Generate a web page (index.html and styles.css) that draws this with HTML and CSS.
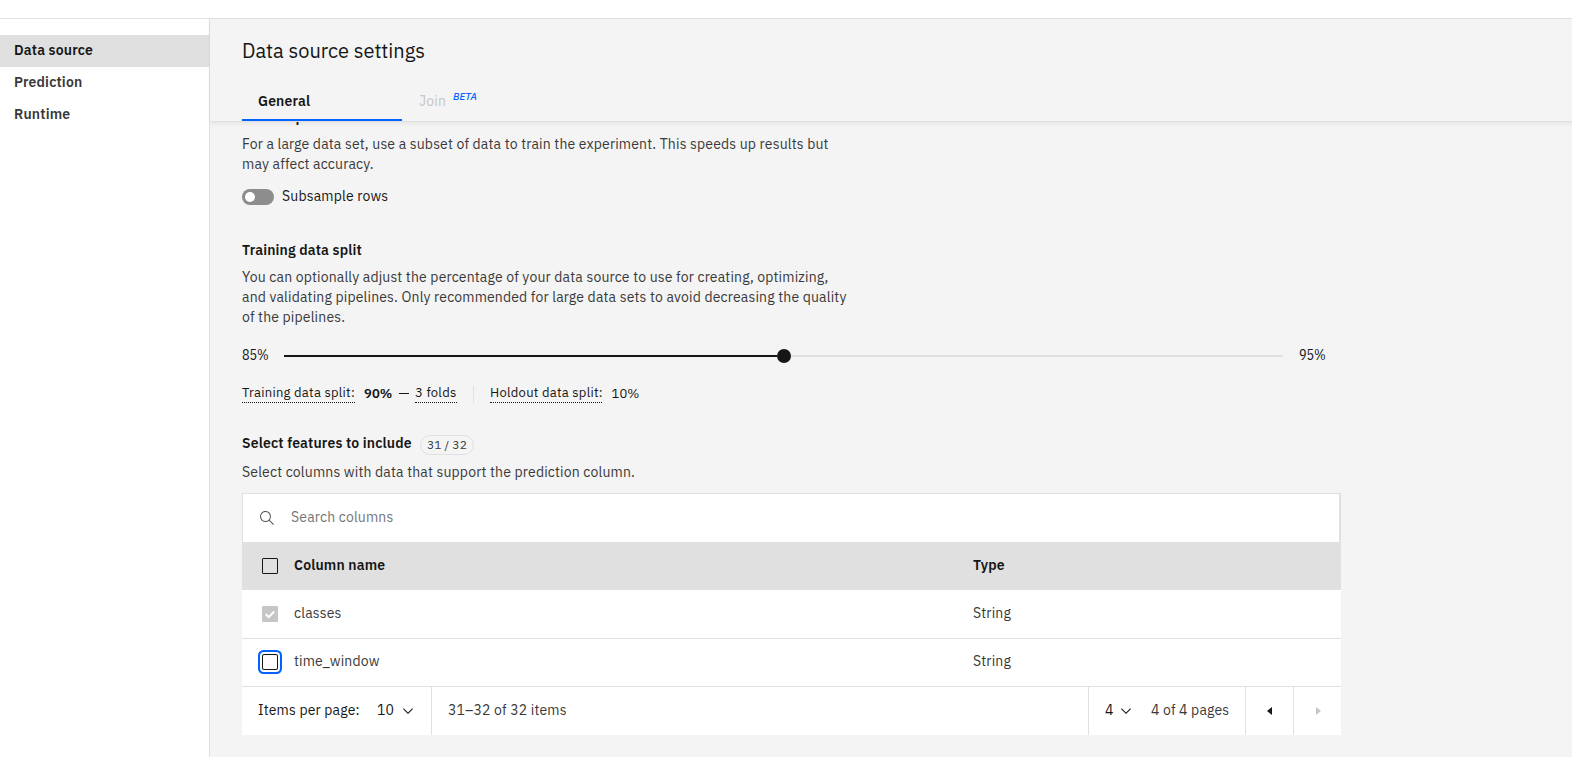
FILE: index.html
```html
<!DOCTYPE html>
<html lang="en">
<head>
<meta charset="utf-8">
<title>Data source settings</title>
<link rel="stylesheet" href="styles.css">
</head>
<body>
<div class="topbar"></div>
<div class="shell">
  <nav class="sidebar">
    <a class="nav-item nav-item--active">Data source</a>
    <a class="nav-item">Prediction</a>
    <a class="nav-item">Runtime</a>
  </nav>
  <main class="main">
    <header class="header">
      <h1 class="title">Data source settings</h1>
      <div class="tabs">
        <div class="tab tab--active"><span>General</span></div>
        <div class="tab tab--disabled"><span>Join</span><em class="beta">BETA</em></div>
      </div>
    </header>
    <div class="content">
      <h2 class="heading heading--clipped">Subsample</h2>
      <p class="text">For a large data set, use a subset of data to train the experiment. This speeds up results but<br>may affect accuracy.</p>
      <div class="toggle-row"><span class="toggle"><span class="knob"></span></span><span class="toggle-label">Subsample rows</span></div>
      <h2 class="heading heading--split">Training data split</h2>
      <p class="text">You can optionally adjust the percentage of your data source to use for creating, optimizing,<br>and validating pipelines. Only recommended for large data sets to avoid decreasing the quality<br>of the pipelines.</p>
      <div class="slider">
        <span class="slider-min">85%</span>
        <div class="track"><div class="fill"></div><div class="thumb"></div><div class="rest"></div></div>
        <span class="slider-max">95%</span>
      </div>
      <div class="split">
        <span class="term term--train">Training data split:</span>
        <strong class="train-value">90%</strong>
        <span class="dash"></span>
        <span class="term term--folds">3 folds</span>
        <span class="divider"></span>
        <span class="term term--holdout">Holdout data split:</span>
        <span class="holdout-value">10%</span>
      </div>
      <div class="features-head"><h2 class="heading heading--features">Select features to include</h2><span class="tag">31 / 32</span></div>
      <p class="text features-desc">Select columns with data that support the prediction column.</p>
      <section class="table">
        <div class="search">
          <svg class="search-icon" width="16" height="16" viewBox="0 0 16 16"><path d="M15 14.3L10.7 10c1.9-2.3 1.6-5.8-.7-7.7S4.200.7 2.300 3 .7 8.800 3 10.700c2 1.700 5 1.700 7 0l4.300 4.300.7-.7zM2 6.500C2 4 4 2 6.500 2S11 4 11 6.500 9 11 6.500 11 2 9 2 6.500z"/></svg>
          <span class="placeholder">Search columns</span>
        </div>
        <div class="row row--head"><span class="check"></span><span class="cell-name">Column name</span><span class="cell-type">Type</span></div>
        <div class="row"><span class="check check--disabled"><svg width="16" height="16" viewBox="0 0 16 16"><path d="M3.800 8.300L6.700 11.100 12.300 5.500" fill="none" stroke="#fff" stroke-width="2"/></svg></span><span class="cell-name">classes</span><span class="cell-type">String</span></div>
        <div class="row row--line"><span class="check check--focus"></span><span class="cell-name">time_window</span><span class="cell-type">String</span></div>
        <footer class="pagination">
          <div class="page-size"><span class="page-size-label">Items per page:</span><span class="page-size-value">10</span><svg class="chevron" width="16" height="16" viewBox="0 0 16 16"><path d="M8 11L3 6l.7-.7L8 9.600l4.300-4.300.7.7z"/></svg></div>
          <span class="range">31–32 of 32 items</span>
          <div class="page-pick"><span class="page-value">4</span><svg class="chevron" width="16" height="16" viewBox="0 0 16 16"><path d="M8 11L3 6l.7-.7L8 9.600l4.300-4.300.7.7z"/></svg><span class="page-total">4 of 4 pages</span></div>
          <div class="page-button"><svg width="16" height="16" viewBox="0 0 16 16"><path d="M10 4v8L5 8z"/></svg></div>
          <div class="page-button page-button--disabled"><svg width="16" height="16" viewBox="0 0 16 16"><path d="M6 4v8l5-4z"/></svg></div>
        </footer>
      </section>
    </div>
  </main>
</div>
</body>
</html>
```
FILE: styles.css
```css
* { box-sizing: border-box; }
body { margin: 0; height: 757px; overflow: hidden; display: flex; flex-direction: column; background: #fff; color: #161616; font-family: "IBM Plex Sans", Roboto, sans-serif; font-size: 14px; line-height: 20px; letter-spacing: 0.16px; }
h1, h2, p { margin: 0; }
span, strong, h1, h2, p, a { white-space: nowrap; }
.topbar { height: 19px; flex: none; border-bottom: 1px solid #e0e0e0; }
.shell { display: flex; flex: 1; min-height: 0; }
.sidebar { width: 210px; flex: none; padding-top: 16px; border-right: 1px solid #e0e0e0; }
.nav-item { display: block; height: 32px; padding: 5px 14px; font-weight: 600; color: #393939; }
.nav-item--active { background: #e0e0e0; color: #161616; }
.main { flex: 1; min-width: 0; background: #f4f4f4; display: flex; flex-direction: column; }
.header { height: 103px; flex: none; padding-left: 32px; border-bottom: 1px solid #e0e0e0; box-shadow: 0 2px 4px rgba(0, 0, 0, 0.06); z-index: 1; background: #f4f4f4; }
.title { font-size: 20px; line-height: 28px; font-weight: 400; padding-top: 18px; letter-spacing: 0; }
.tabs { display: flex; gap: 1px; margin-top: 16px; height: 40px; }
.tab { width: 160px; padding: 10px 16px; display: flex; }
.tab--active { font-weight: 600; border-bottom: 2px solid #0062ff; }
.tab--disabled { color: #c6c6c6; }
.beta { margin-left: 7px; margin-top: -4px; font-size: 10px; font-weight: 500; color: #0062ff; letter-spacing: 0.1px; }
.content { flex: 1; min-height: 0; overflow: hidden; padding-left: 32px; }
.heading { font-size: 14px; line-height: 20px; font-weight: 600; }
.heading--clipped { margin-top: -15px; margin-bottom: 7px; }
.text { color: #393939; }
.toggle-row { display: flex; align-items: center; gap: 8px; height: 20px; margin-top: 13px; }
.toggle { width: 32px; height: 16px; border-radius: 8px; background: #8d8d8d; padding: 3px; }
.knob { display: block; width: 10px; height: 10px; border-radius: 50%; background: #fff; }
.toggle-label { margin-top: -2px; }
.heading--split { margin-top: 33px; margin-bottom: 7px; }
.slider { display: flex; align-items: center; height: 20px; margin-top: 19px; width: 1099px; }
.slider-min, .slider-max { font-family: "IBM Plex Sans Condensed", "Roboto Condensed", "IBM Plex Sans", Roboto, sans-serif; letter-spacing: 0; }
.slider-min { width: 42px; margin-top: -2px; }
.track { width: 999px; display: flex; align-items: center; }
.fill { height: 2px; width: 493px; background: #161616; }
.thumb { width: 14px; height: 14px; border-radius: 50%; background: #161616; }
.rest { height: 2px; flex: 1; background: #e0e0e0; }
.slider-max { margin-left: 16px; margin-top: -2px; }
.split { display: flex; margin-top: 19px; height: 18px; font-size: 13px; line-height: 16px; }
.term { height: 18px; border-bottom: 1px dotted #161616; line-height: 15px; letter-spacing: 0.26px; }
.term--train { width: 113px; }
.train-value { width: 27px; margin: 1px 0 0 9px; font-weight: 600; letter-spacing: 0.1px; }
.dash { width: 10px; height: 1px; margin: 8px 6px 0 8px; background: #161616; }
.term--folds { width: 42px; }
.divider { width: 1px; height: 17px; margin: 1px 16px 0; background: #e0e0e0; }
.term--holdout { width: 112px; }
.holdout-value { margin: 1px 0 0 9.5px; letter-spacing: 0.1px; }
.features-head { display: flex; margin-top: 30px; height: 24px; }
.heading--features { width: 170px; }
.tag { width: 54px; height: 20px; margin: 2px 0 0 8px; border: 1px solid #e0e0e0; border-radius: 10px; text-align: center; font-size: 12px; line-height: 17px; color: #393939; }
.features-desc { margin-top: 5px; }
.table { width: 1099px; margin-top: 11px; background: #fff; }
.search { height: 49px; display: flex; border: solid #e0e0e0; border-width: 1px 2px 0 1px; padding-left: 16px; }
.search-icon { margin-top: 16px; fill: #525252; }
.placeholder { margin: 13px 0 0 16px; color: #757575; }
.row { height: 48px; display: flex; padding: 13px 0 0 20px; color: #393939; }
.row--head { background: #e0e0e0; color: #161616; font-weight: 600; }
.row--line { border-top: 1px solid #e0e0e0; padding-top: 12px; }
.check { width: 16px; height: 16px; margin-top: 3px; border: 1px solid #161616; border-radius: 1px; }
.check--disabled { background: #c6c6c6; border: 0; }
.check svg { display: block; }
.check--focus { box-shadow: 0 0 0 2px #fff, 0 0 0 4px #0062ff; border-radius: 2px; }
.cell-name { width: 679px; margin-left: 16px; }
.pagination { height: 49px; display: flex; border-top: 1px solid #e0e0e0; color: #393939; }
.page-size { width: 190px; display: flex; padding: 13px 0 0 16px; border-right: 1px solid #e0e0e0; color: #161616; }
.page-size-label { width: 119px; }
.page-size-value { width: 23px; }
.chevron { margin-top: 3px; fill: #161616; }
.range { padding: 13px 16px; flex: 1; }
.page-pick { width: 157px; display: flex; padding: 13px 0 0 16px; border-left: 1px solid #e0e0e0; }
.page-value { width: 13px; color: #161616; }
.page-total { margin-left: 17px; }
.page-button { width: 48px; border-left: 1px solid #e0e0e0; padding: 16px 0 0 16px; fill: #161616; }
.page-button--disabled { fill: #c6c6c6; }
```
